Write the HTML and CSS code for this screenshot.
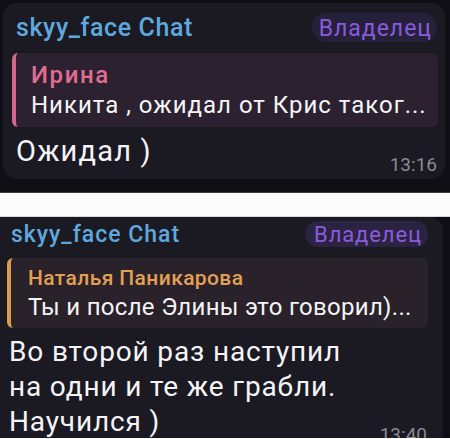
FILE: index.html
```html
<!DOCTYPE html>
<html lang="ru">
<head>
  <meta charset="UTF-8">
  <title>skyy_face Chat</title>
  <link rel="stylesheet" href="styles.css">
</head>
<body>

  <div class="shot shot-one">
    <div class="bubble">
      <div class="head">
        <span class="chat-name">skyy_face Chat</span>
        <span class="badge">Владелец</span>
      </div>
      <div class="quote quote-pink">
        <div class="quote-author">Ирина</div>
        <div class="quote-text">Никита , ожидал от Крис таког...</div>
      </div>
      <div class="msg">
        <span class="msg-text">Ожидал )</span>
        <span class="time">13:16</span>
      </div>
    </div>
  </div>

  <div class="gap"></div>

  <div class="shot shot-two">
    <div class="bubble">
      <div class="head">
        <span class="chat-name">skyy_face Chat</span>
        <span class="badge">Владелец</span>
      </div>
      <div class="quote quote-orange">
        <div class="quote-author">Наталья Паникарова</div>
        <div class="quote-text">Ты и после Элины это говорил)...</div>
      </div>
      <div class="msg">
        <span class="msg-text">Во второй раз наступил<br>на одни и те же грабли.<br>Научился )</span>
        <span class="time">13:40</span>
      </div>
    </div>
  </div>

</body>
</html>
```

FILE: styles.css
```css
body {
  margin: 0;
  background: #fbfbfb;
  font-family: Roboto, 'Noto Sans', sans-serif;
  width: 450px;
  height: 439px;
  overflow: hidden;
}

.shot {
  background: #0f0e14;
  overflow: hidden;
  box-sizing: border-box;
}

.shot-one {
  height: 193px;
  padding: 3px 5px 0 3px;
  border-bottom: 1px solid #3a3a40;
}

.shot-two {
  height: 222px;
  padding: 0 7px 0 0;
  border-top: 1px solid #d8d8dc;
}

.gap {
  height: 23px;
}

.bubble {
  background: #1b1a23;
  border-radius: 14px;
  display: flex;
  flex-direction: column;
  box-sizing: border-box;
}

/* первый скрин */
.shot-one .bubble {
  height: 176px;
  padding: 10px 8px 0 13px;
}

.head {
  display: flex;
  justify-content: space-between;
  align-items: baseline;
}

.chat-name {
  color: #5fa8de;
  font-weight: 500;
}

.shot-one .chat-name {
  font-size: 25px;
  letter-spacing: 0.6px;
}

.badge {
  color: #8a5bda;
  background: #25213a;
  border-radius: 15px;
}

.shot-one .badge {
  font-size: 23px;
  letter-spacing: 1px;
  line-height: 27px;
  padding: 2px 5px 0 7px;
}

.quote {
  border-left: 4px solid;
  border-radius: 6px;
}

.shot-one .quote {
  margin: 11px -1px 0 -4px;
  padding: 10px 8px 8px 15px;
}

.quote-pink {
  background: #2c2130;
  border-color: #d6658a;
}

.quote-orange {
  background: #29222a;
  border-color: #dc9c4c;
}

.quote-author {
  font-weight: 500;
  line-height: 24px;
}

.shot-one .quote-author {
  font-size: 24px;
  letter-spacing: 1.6px;
}

.quote-pink .quote-author {
  color: #e06d92;
}

.quote-orange .quote-author {
  color: #e3a052;
}

.quote-text {
  color: #f4f4f6;
}

.shot-one .quote-text {
  font-size: 24px;
  letter-spacing: 1px;
  line-height: 27px;
  margin-top: 5px;
}

.msg {
  display: flex;
  justify-content: space-between;
  align-items: flex-end;
  color: #f5f5f7;
}

.shot-one .msg {
  margin-top: 7px;
}

.shot-one .msg-text {
  font-size: 29px;
  letter-spacing: 1.2px;
  line-height: 34px;
  padding-bottom: 7px;
}

.time {
  color: #8a8993;
  font-size: 19px;
  line-height: 20px;
}

/* второй скрин */
.shot-two .bubble {
  height: 240px;
  padding: 4px 15px 0 11px;
  border-radius: 0 14px 14px 0;
}

.shot-two .chat-name {
  font-size: 23px;
  letter-spacing: 1px;
}

.shot-two .badge {
  background: #2a2342;
  font-size: 22px;
  letter-spacing: 0.9px;
  line-height: 24px;
  padding: 2px 6px 0 9px;
}

.shot-two .quote {
  margin: 10px 0 0 -4px;
  padding: 8px 8px 7px 17px;
}

.shot-two .quote-author {
  font-size: 21px;
  letter-spacing: 0.4px;
}

.shot-two .quote-text {
  font-size: 24px;
  letter-spacing: 0.3px;
  line-height: 28px;
  margin-top: 3px;
}

.shot-two .msg {
  margin-top: 6px;
  margin-left: -2px;
  margin-right: 1px;
}

.shot-two .msg-text {
  font-size: 28px;
  letter-spacing: 0.85px;
  line-height: 35px;
  padding-bottom: 6px;
}
```
